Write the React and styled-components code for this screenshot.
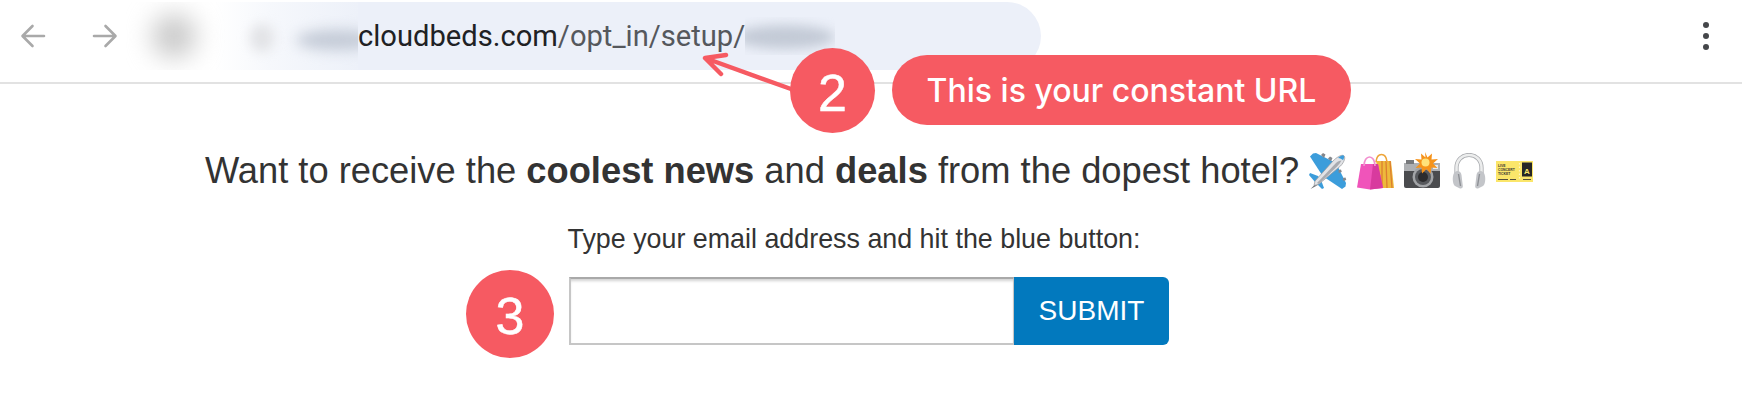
import React from "react";
import styled, { createGlobalStyle } from "styled-components";

const Global = createGlobalStyle`
  html, body { margin: 0; padding: 0; background: #fff; }
  body { font-family: "Liberation Sans", Arial, sans-serif; color: #333; }
`;

const Page = styled.div`
  position: relative;
  width: 1742px;
  height: 404px;
  overflow: hidden;
`;

const Toolbar = styled.header`
  display: flex;
  align-items: flex-start;
  height: 80px;
  border-bottom: 2px solid #e2e2e2;
  padding: 2px 0 0 20px;
`;

const NavIcon = styled.svg`
  flex: none;
  margin-top: 21px;
  margin-right: ${(p) => p.$gap}px;
`;

const BlurPatch = styled.div`
  position: relative;
  flex: none;
  width: 232px;
  height: 68px;
  overflow: hidden;
  background: linear-gradient(90deg, #fff 0%, #fff 38%, #f6f8fc 62%, #edf1f9 100%);
`;

const Smudge = styled.span`
  position: absolute;
  left: ${(p) => p.$x}px;
  top: ${(p) => p.$y}px;
  width: ${(p) => p.$w}px;
  height: ${(p) => p.$h}px;
  border-radius: 50%;
  background: ${(p) => p.$color};
  filter: blur(${(p) => p.$blur}px);
`;

const UrlPill = styled.div`
  display: flex;
  align-items: center;
  flex: none;
  width: 683px;
  height: 68px;
  background: #ecf0f9;
  border-radius: 0 34px 34px 0;
  font-family: Roboto, sans-serif;
  font-size: 29.15px;
  color: #202124;
`;

const UrlPath = styled.span`
  color: #55585d;
`;

const UrlBlur = styled.div`
  position: relative;
  flex: none;
  width: 90px;
  height: 38px;
  overflow: hidden;
`;

const MenuDots = styled.div`
  display: flex;
  flex-direction: column;
  gap: 5px;
  margin: 20px 0 0 auto;
  padding-right: 33px;
`;

const Dot = styled.span`
  width: 6px;
  height: 6px;
  border-radius: 50%;
  background: #45474a;
`;

const Main = styled.main`
  display: flex;
  flex-direction: column;
  align-items: center;
`;

const Headline = styled.h1`
  display: flex;
  align-items: center;
  margin: 67px 4px 0 0;
  font-size: 36.3px;
  line-height: 40px;
  font-weight: 400;
  color: #333;
  white-space: pre;

  b { font-weight: 700; }
`;

const EmojiRow = styled.span`
  display: flex;
  align-items: center;
  gap: 10px;
  margin-left: 10px;
`;

const Prompt = styled.p`
  margin: 32px 34px 0 0;
  font-size: 26.85px;
  line-height: 32px;
  color: #333;
`;

const Form = styled.form`
  position: relative;
  display: flex;
  margin: 22px 4px 0 0;
`;

const EmailInput = styled.input`
  box-sizing: border-box;
  width: 445px;
  height: 68px;
  border: 2px solid #c6c6c6;
  border-top-color: #a9a9a9;
  border-right: 1px solid #c6c6c6;
  background: #fff;
  box-shadow: inset 0 3px 3px -1px rgba(0, 0, 0, 0.18);
  outline: none;
`;

const SubmitButton = styled.button`
  width: 155px;
  height: 68px;
  border: 0;
  border-radius: 0 6px 6px 0;
  background: #0279be;
  color: #fff;
  font-family: "Liberation Sans", Arial, sans-serif;
  font-size: 28px;
`;

const Badge = styled.div`
  position: absolute;
  display: flex;
  align-items: center;
  justify-content: center;
  box-sizing: border-box;
  padding-top: 4px;
  width: ${(p) => p.$size}px;
  height: ${(p) => p.$size}px;
  border-radius: 50%;
  background: #f65a62;
  color: #fff;
  font-family: "Liberation Sans", Arial, sans-serif;
  font-size: 52px;
  -webkit-text-stroke: 0.5px #fff;
`;

const FormBadge = styled(Badge)`
  left: -103px;
  top: -7px;
`;

const UrlBadge = styled(Badge)`
  left: 790px;
  top: 48px;
`;

const Callout = styled.div`
  position: absolute;
  left: 892px;
  top: 55px;
  display: flex;
  align-items: center;
  justify-content: center;
  width: 459px;
  height: 70px;
  border-radius: 35px;
  background: #f65a62;
  color: #fff;
  font-family: Inter, sans-serif;
  font-weight: 500;
  font-size: 32px;
`;

const ArrowIcon = styled.svg`
  position: absolute;
  left: 695px;
  top: 45px;
`;

const Arrow = ({ flip }) => (
  <NavIcon
    $gap={flip ? 8 : 46}
    width="26"
    height="26"
    viewBox="0 0 26 26"
    fill="none"
    stroke="#a9a9a9"
    strokeWidth="2.6"
    strokeLinecap="round"
    strokeLinejoin="round"
  >
    {flip ? <path d="M2 13h21M13.5 3l10 10-10 10" /> : <path d="M24 13H3M12.5 3l-10 10 10 10" />}
  </NavIcon>
);

const Plane = () => (
  <svg width="38" height="38" viewBox="0 0 38 38">
    {/* wings and tail fins first, the body goes over them */}
    <path d="M25 10 7 1 4 1.500 1 4.500 13 23z" fill="#3c9ddb" />
    <path d="M28 13 37 31 36.500 34.500 33 37 15 25z" fill="#3c9ddb" />
    <path d="M9 24 1 21 0 23 6 30 13 37 15 36 12 28z" fill="#3c9ddb" />
    <path d="M12 3 14 1l2.500 1.500L15 6zM19 6.500 21 4.500l2.500 1.500L22 9.500zM34 26l2.500-.5.8 2.500-3 1zM29.500 18l2.500-.5.8 2.500-3 1z" fill="#85878c" />
    <path d="M5 33.500 6 29 24 9c3.500-3.500 8-6.500 10.500-5.500s1 6.500-3 10.500L10 32z" fill="#e2e3e6" stroke="#94969b" strokeWidth=".7" />
    <path d="M8 31 27 11c1.500-1.500 3.500-2.500 5.500-2.500C31.500 10.500 30 12.500 28 14.500L10 32z" fill="#a9abb0" />
    <path d="M29 6c2.500-2 4.500-3 5.500-2.500s.8 2.500-.5 4.800c-1-1.300-3-2.300-5-2.300z" fill="#3c9ddb" />
    <path d="M5 33.500 1.500 37 9 33z" fill="#6f7176" />
  </svg>
);

const Bags = () => (
  <svg width="37" height="37" viewBox="0 0 37 37">
    <path d="M19 8h15l3 27H24z" fill="#eeb93c" />
    <path d="M25 8v27M29 8l1 27M33 8l2 27" stroke="#dc7f30" strokeWidth="1.300" />
    <path d="M19 9c1-10 10-10 11 0" fill="none" stroke="#eda53a" strokeWidth="1.600" />
    <path d="M4 11h17l5 24-13 1.500L0 34.500z" fill="#f054ba" />
    <path d="M16 11h5l5 24-13 1.500z" fill="#d83a9e" />
    <path d="M7 13C7 1 18 1 18 13" fill="none" stroke="#f290cf" strokeWidth="1.700" />
  </svg>
);

const Camera = () => (
  <svg width="38" height="38" viewBox="0 0 38 38">
    <rect x="0" y="11" width="36" height="25" rx="2" fill="#4a4b4e" />
    <rect x="0" y="11" width="36" height="8" fill="#aeb0b3" />
    <rect x="2" y="8" width="8" height="4" fill="#77797c" />
    <circle cx="19" cy="25" r="10.500" fill="#a2a4a7" />
    <circle cx="19" cy="25" r="8" fill="#57595d" />
    <circle cx="19" cy="25" r="5" fill="#2c2c2e" />
    <rect x="29" y="13" width="5" height="4" fill="#ececec" />
    <path d="M21 0l2.500 5.500L28 1.500l-.5 6L34 7l-5 4.500 4.500 4.500-6-.5-1 6-4-4.500-4.500 4.500-.5-6-6 .5 4.500-4.500-5-4.500 6.500.5-.5-6 4.500 4z" fill="#f6931a" />
    <circle cx="21.500" cy="10.500" r="4" fill="#ffe27a" />
  </svg>
);

const Headphones = () => (
  <svg width="34" height="36" viewBox="0 0 34 36">
    <path d="M4.500 24V15C4.500 7 10 2 17 2s12.500 5 12.500 13v9" fill="none" stroke="#a8aaae" strokeWidth="4.200" />
    <path d="M4.500 24V15C4.500 7 10 2 17 2s12.500 5 12.500 13v9" fill="none" stroke="#eceded" strokeWidth="2.600" />
    <path d="M3 19C0 21 0 31 3 33l5 2.500c2 .3 3-.8 2.800-2.500L9.500 22c-.4-3.500-4-5-6.500-3z" fill="#c3c5c9" />
    <path d="M31 19c3 2 3 12 0 14l-5 2.500c-2 .3-3-.8-2.800-2.500l1.300-11c.4-3.500 4-5 6.500-3z" fill="#c3c5c9" />
    <path d="M6.500 21 8.500 33M27.500 21 25.500 33" stroke="#8e9095" strokeWidth="1.400" />
  </svg>
);

const Ticket = () => (
  <svg width="37" height="21" viewBox="0 0 37 21" fontFamily="Liberation Sans, sans-serif" fontWeight="700">
    <rect width="37" height="21" fill="#fbe66a" />
    <rect x="26" y="1.500" width="10" height="14" fill="#262626" />
    <text x="31" y="13" fontSize="8" fill="#fbe66a" textAnchor="middle">A</text>
    <text x="2" y="6" fontSize="3.400" fill="#333">LIVE</text>
    <text x="2" y="10" fontSize="3.400" fill="#333">CONCERT</text>
    <text x="2" y="14" fontSize="3.400" fill="#333">TICKET</text>
    <path d="M2 18.500h10M14 18.500h6M27 18.500h8" stroke="#55503a" strokeWidth="1.200" />
    <path d="M23.500 2v17" stroke="#fff6c0" strokeWidth="1.200" strokeDasharray="1.500 2" />
  </svg>
);

export default function App() {
  return (
    <Page>
      <Global />
      <Toolbar>
        <Arrow />
        <Arrow flip />
        <BlurPatch>
          <Smudge $x={26} $y={12} $w={44} $h={44} $color="#c8c8c8" $blur={13} />
          <Smudge $x={124} $y={22} $w={24} $h={28} $color="#e2e3e6" $blur={6} />
          <Smudge $x={170} $y={28} $w={80} $h={20} $color="#c3cad6" $blur={7} />
        </BlurPatch>
        <UrlPill>
          cloudbeds.com<UrlPath>/opt_in/setup/</UrlPath>
          <UrlBlur>
            <Smudge $x={-10} $y={8} $w={100} $h={24} $color="#c3cad6" $blur={6} />
          </UrlBlur>
        </UrlPill>
        <MenuDots>
          <Dot />
          <Dot />
          <Dot />
        </MenuDots>
      </Toolbar>
      <Main>
        <Headline>
          Want to receive the <b>coolest news</b> and <b>deals</b> from the dopest hotel?
          <EmojiRow>
            <Plane />
            <Bags />
            <Camera />
            <Headphones />
            <Ticket />
          </EmojiRow>
        </Headline>
        <Prompt>Type your email address and hit the blue button:</Prompt>
        <Form onSubmit={(e) => e.preventDefault()}>
          <FormBadge $size={88}>3</FormBadge>
          <EmailInput type="text" />
          <SubmitButton type="submit">SUBMIT</SubmitButton>
        </Form>
      </Main>
      <ArrowIcon width="100" height="50" viewBox="0 0 100 50" fill="none" stroke="#f65a62" strokeWidth="4.500" strokeLinecap="round" strokeLinejoin="round">
        <path d="M10 13 96 44M31 10 10 13 26 29" />
      </ArrowIcon>
      <UrlBadge $size={85}>2</UrlBadge>
      <Callout>This is your constant URL</Callout>
    </Page>
  );
}
